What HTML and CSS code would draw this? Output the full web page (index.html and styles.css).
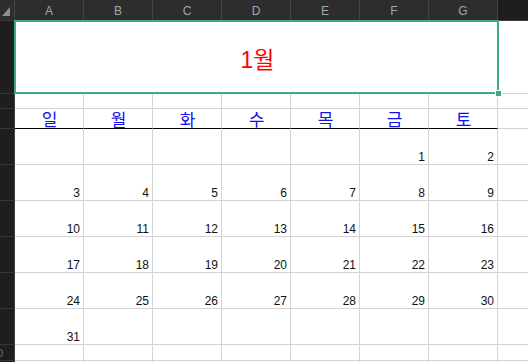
FILE: index.html
```html
<!DOCTYPE html>
<html lang="ko">
<head>
<meta charset="utf-8">
<link rel="stylesheet" href="styles.css">
</head>
<body>
<div class="sheet">
  <div class="row hrow">
    <div class="corner"><span class="tri"></span></div>
    <div class="ch">A</div><div class="ch">B</div><div class="ch">C</div><div class="ch">D</div><div class="ch">E</div><div class="ch">F</div><div class="ch">G</div>
    <div class="ch-rest"></div>
  </div>
  <div class="row r1">
    <div class="rh"><span>1</span></div>
    <div class="title">1월<span class="handle"></span></div>
    <div class="c rest"></div>
  </div>
  <div class="row r2">
    <div class="rh"><span>2</span></div>
    <div class="c"></div><div class="c"></div><div class="c"></div><div class="c"></div><div class="c"></div><div class="c"></div><div class="c"></div>
    <div class="c rest"></div>
  </div>
  <div class="row r3">
    <div class="rh"><span>3</span></div>
    <div class="c wd">일</div><div class="c wd">월</div><div class="c wd">화</div><div class="c wd">수</div><div class="c wd">목</div><div class="c wd">금</div><div class="c wd">토</div>
    <div class="c rest"></div>
  </div>
  <div class="row rd">
    <div class="rh"><span>4</span></div>
    <div class="c n"></div><div class="c n"></div><div class="c n"></div><div class="c n"></div><div class="c n"></div><div class="c n">1</div><div class="c n">2</div>
    <div class="c rest"></div>
  </div>
  <div class="row rd">
    <div class="rh"><span>5</span></div>
    <div class="c n">3</div><div class="c n">4</div><div class="c n">5</div><div class="c n">6</div><div class="c n">7</div><div class="c n">8</div><div class="c n">9</div>
    <div class="c rest"></div>
  </div>
  <div class="row rd">
    <div class="rh"><span>6</span></div>
    <div class="c n">10</div><div class="c n">11</div><div class="c n">12</div><div class="c n">13</div><div class="c n">14</div><div class="c n">15</div><div class="c n">16</div>
    <div class="c rest"></div>
  </div>
  <div class="row rd">
    <div class="rh"><span>7</span></div>
    <div class="c n">17</div><div class="c n">18</div><div class="c n">19</div><div class="c n">20</div><div class="c n">21</div><div class="c n">22</div><div class="c n">23</div>
    <div class="c rest"></div>
  </div>
  <div class="row rd">
    <div class="rh"><span>8</span></div>
    <div class="c n">24</div><div class="c n">25</div><div class="c n">26</div><div class="c n">27</div><div class="c n">28</div><div class="c n">29</div><div class="c n">30</div>
    <div class="c rest"></div>
  </div>
  <div class="row rd">
    <div class="rh"><span>9</span></div>
    <div class="c n">31</div><div class="c n"></div><div class="c n"></div><div class="c n"></div><div class="c n"></div><div class="c n"></div><div class="c n"></div>
    <div class="c rest"></div>
  </div>
  <div class="row r10">
    <div class="rh"><span>10</span></div>
    <div class="c"></div><div class="c"></div><div class="c"></div><div class="c"></div><div class="c"></div><div class="c"></div><div class="c"></div>
    <div class="c rest"></div>
  </div>
  <div class="row r11">
    <div class="rh"></div>
    <div class="c"></div><div class="c"></div><div class="c"></div><div class="c"></div><div class="c"></div><div class="c"></div><div class="c"></div>
    <div class="c rest"></div>
  </div>
</div>
</body>
</html>
```
FILE: styles.css
```css
* { box-sizing: border-box; }
html, body { margin: 0; padding: 0; background: #fff; }
body { width: 528px; height: 362px; overflow: hidden; font-family: "Liberation Sans", Arial, "Noto Sans CJK KR", sans-serif; }

.sheet { display: flex; flex-direction: column; width: 528px; height: 362px; overflow: hidden; }

.row { display: grid; grid-template-columns: 15px repeat(7, 69px) 1fr; flex: none; }
.hrow { height: 21px; }
.r1 { height: 73px; }
.r2 { height: 15px; }
.r3 { height: 20px; }
.rd { height: 36px; }
.r10 { height: 16px; }
.r11 { height: 20px; }

.corner {
  background: #2d2d2d;
  border-right: 1px solid #444;
  border-bottom: 1px solid #3a3a3a;
  display: flex; align-items: flex-end; justify-content: flex-start;
  padding: 0 0 4px 2px;
}
.tri {
  width: 0; height: 0;
  border-left: 8px solid transparent;
  border-bottom: 9px solid #8e8e8e;
}
.ch {
  background: #2d2d2d;
  color: #a6a6a6;
  font-size: 12px;
  border-right: 1px solid #444;
  border-bottom: 1px solid #3a3a3a;
  display: flex; align-items: center; justify-content: center;
  padding-top: 2px;
}
.ch-rest { background: #1e1e1f; border-bottom: 1px solid #3e3e3e; }

.rh {
  background: #1e1e20;
  border-right: 1px solid #404040;
  border-bottom: 1px solid #363636;
  overflow: hidden;
  display: flex; align-items: center;
}
.rh span {
  flex: none;
  width: 30px; margin-left: -18px;
  text-align: center;
  color: #6e6e6e;
  font-size: 11px;
}

.c { border-right: 1px solid #d4d4d4; border-bottom: 1px solid #d4d4d4; }
.rest { border-right: none; }

.title {
  grid-column: 2 / 9;
  position: relative;
  display: flex; align-items: center; justify-content: center;
  color: #ff0000;
  font-size: 23px;
  padding-left: 2px;
}
.title::after {
  content: "";
  position: absolute;
  left: -1px; top: -1px; right: -1px; bottom: 0;
  border: 2px solid #3dab80;
}
.handle {
  position: absolute;
  right: -4px; bottom: -3px;
  width: 7px; height: 7px;
  background: #3dab80;
  border: 1px solid #fff;
  z-index: 2;
}

.wd {
  border-bottom-color: #000;
  color: #1010f0;
  font-family: "Noto Sans CJK KR", sans-serif;
  font-size: 17px;
  line-height: 19px;
  display: flex; align-items: center; justify-content: center;
  padding-left: 1px;
}
.r3 .rest { border-bottom-color: #d4d4d4; }

.n {
  display: flex; align-items: flex-end; justify-content: flex-end;
  padding-right: 3px;
  font-size: 12px;
  line-height: 14px;
  color: #111;
}
```
